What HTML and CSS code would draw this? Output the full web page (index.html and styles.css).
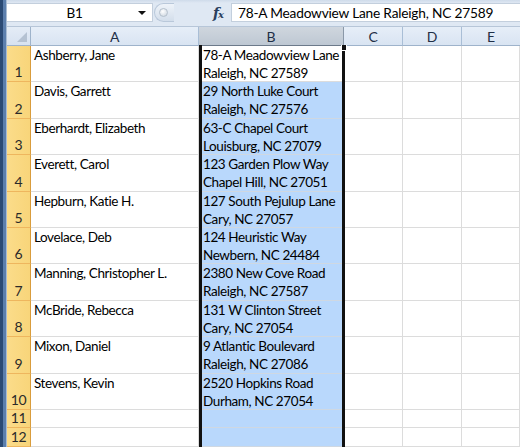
FILE: index.html
```html
<!DOCTYPE html>
<html>
<head>
<meta charset="utf-8">
<link rel="stylesheet" href="styles.css">
</head>
<body>
<div class="app">
  <div class="side"></div>
  <div class="main">
    <div class="fbar">
      <div class="namebox">
        <span class="name">B1</span>
        <span class="drop"></span>
      </div>
      <div class="grip"><span class="knob"></span></div>
      <div class="fx"><i>f</i><span class="x">x</span></div>
      <div class="formula">78-A Meadowview Lane Raleigh, NC 27589</div>
    </div>
    <div class="sheet">
      <div class="corner"><span class="tri"></span></div>
      <div class="ch">A</div>
      <div class="ch sel">B</div>
      <div class="ch">C</div>
      <div class="ch">D</div>
      <div class="ch last">E</div>

      <div class="rh">1</div><div class="c">Ashberry, Jane</div><div class="c b active">78-A Meadowview Lane<br>Raleigh, NC 27589</div><div class="c"></div><div class="c"></div><div class="c"></div>
      <div class="rh">2</div><div class="c">Davis, Garrett</div><div class="c b">29 North Luke Court<br>Raleigh, NC 27576</div><div class="c"></div><div class="c"></div><div class="c"></div>
      <div class="rh">3</div><div class="c">Eberhardt, Elizabeth</div><div class="c b">63-C Chapel Court<br>Louisburg, NC 27079</div><div class="c"></div><div class="c"></div><div class="c"></div>
      <div class="rh">4</div><div class="c">Everett, Carol</div><div class="c b">123 Garden Plow Way<br>Chapel Hill, NC 27051</div><div class="c"></div><div class="c"></div><div class="c"></div>
      <div class="rh">5</div><div class="c">Hepburn, Katie H.</div><div class="c b">127 South Pejulup Lane<br>Cary, NC 27057</div><div class="c"></div><div class="c"></div><div class="c"></div>
      <div class="rh">6</div><div class="c">Lovelace, Deb</div><div class="c b">124 Heuristic Way<br>Newbern, NC 24484</div><div class="c"></div><div class="c"></div><div class="c"></div>
      <div class="rh">7</div><div class="c">Manning, Christopher L.</div><div class="c b">2380 New Cove Road<br>Raleigh, NC 27587</div><div class="c"></div><div class="c"></div><div class="c"></div>
      <div class="rh">8</div><div class="c">McBride, Rebecca</div><div class="c b">131 W Clinton Street<br>Cary, NC 27054</div><div class="c"></div><div class="c"></div><div class="c"></div>
      <div class="rh">9</div><div class="c">Mixon, Daniel</div><div class="c b">9 Atlantic Boulevard<br>Raleigh, NC 27086</div><div class="c"></div><div class="c"></div><div class="c"></div>
      <div class="rh">10</div><div class="c">Stevens, Kevin</div><div class="c b">2520 Hopkins Road<br>Durham, NC 27054</div><div class="c"></div><div class="c"></div><div class="c"></div>
      <div class="rh">11</div><div class="c"></div><div class="c b"></div><div class="c"></div><div class="c"></div><div class="c"></div>
      <div class="rh">12</div><div class="c"></div><div class="c b"></div><div class="c"></div><div class="c"></div><div class="c"></div>

      <div class="selbox"><span class="handle"></span></div>
    </div>
  </div>
</div>
</body>
</html>
```
FILE: styles.css
```css
* { box-sizing: border-box; }
html, body { margin: 0; padding: 0; }
body {
  width: 520px;
  height: 447px;
  overflow: hidden;
  background: #fff;
  font-family: Lato, "Liberation Sans", sans-serif;
  font-size: 13.5px;
  letter-spacing: -0.25px;
  color: #000;
}
.app {
  display: flex;
  width: 520px;
  height: 447px;
}
.side {
  width: 7px;
  flex: none;
  background: linear-gradient(to right, #2b4a74 0, #2b4a74 3px, #5c7fad 3px, #5c7fad 6px, #a9bcd3 6px);
}
.main {
  flex: 1;
  display: flex;
  flex-direction: column;
  min-width: 0;
}
.fbar {
  height: 27px;
  flex: none;
  display: flex;
  align-items: stretch;
  padding: 3px 0 4px 0;
  background: linear-gradient(#cfdbea, #dfe8f3 3px, #dfe8f3);
  border-bottom: 1px solid #b7c6d8;
}
.namebox {
  width: 146px;
  background: #fff;
  border: 1px solid #c3cfdd;
  border-left: none;
  display: flex;
  align-items: center;
  position: relative;
}
.name {
  flex: 1;
  text-align: center;
  padding-left: 4px;
  color: #000;
}
.drop {
  width: 0; height: 0;
  border-left: 4px solid transparent;
  border-right: 4px solid transparent;
  border-top: 4px solid #111;
  margin-right: 6px;
  margin-top: 1px;
}
.grip {
  width: 20px;
  margin-left: 1px;
  border-radius: 10px 0 0 10px;
  background: linear-gradient(#eef3f9, #d3deeb);
  border: 1px solid #b9c8da;
  border-right: none;
  display: flex;
  align-items: center;
  padding-left: 4px;
}
.knob {
  width: 9px; height: 9px;
  border-radius: 50%;
  background: radial-gradient(circle at 40% 35%, #ffffff, #c7d1dc);
  border: 1px solid #b4c0cc;
}
.fx {
  width: 57px;
  display: flex;
  align-items: center;
  justify-content: flex-end;
  padding-right: 7px;
  color: #2a3f5e;
  font-family: "DejaVu Serif", "Liberation Serif", serif;
  font-weight: bold;
  letter-spacing: 0;
}
.fx i { font-size: 14px; }
.fx .x { font-size: 10px; font-style: italic; margin-top: 4px; margin-left: -1px; }
.formula {
  flex: 1;
  background: #fff;
  border: 1px solid #c3cfdd;
  border-right: none;
  display: flex;
  align-items: center;
  padding-left: 6px;
  white-space: nowrap;
  overflow: hidden;
  font-size: 13.7px;
  letter-spacing: -0.2px;
}
.sheet {
  flex: 1;
  position: relative;
  display: grid;
  grid-template-columns: 24px 168px 145px 59px 59px 1fr;
  grid-template-rows: 19px repeat(10, 36.4px) 18.5px 18.5px;
  overflow: hidden;
}
.corner {
  background: linear-gradient(#e4ecf6, #d7e2f0);
  border-right: 1px solid #9eb3cb;
  border-bottom: 1px solid #9eb3cb;
  position: relative;
}
.tri {
  position: absolute;
  right: 3px;
  bottom: 3px;
  width: 0; height: 0;
  border-left: 10px solid transparent;
  border-bottom: 10px solid #b5c2d2;
}
.ch {
  background: linear-gradient(#e6eef8, #d9e4f2);
  border-right: 1px solid #a9bed6;
  border-bottom: 1px solid #9eb3cb;
  display: flex;
  align-items: center;
  justify-content: center;
  color: #1f2f47;
  padding-top: 1px;
  font-size: 14px;
}
.ch.sel {
  background: linear-gradient(#cfd6de, #bec8d3);
  border-bottom: 1px solid #6c7a8a;
  border-right: 1px solid #8a98a8;
}
.ch.last { border-right: none; }
.rh {
  background: linear-gradient(to right, #fbdc8a, #f8d57a);
  border-right: 1px solid #d99c3c;
  border-bottom: 1px solid #eeb65e;
  display: flex;
  align-items: flex-end;
  justify-content: center;
  line-height: 18px;
  color: #2a2a2a;
  font-size: 14px;
}
.c {
  border-right: 1px solid #dcdcdc;
  border-bottom: 1px solid #dcdcdc;
  padding-left: 3px;
  line-height: 18px;
  white-space: nowrap;
  overflow: hidden;
  letter-spacing: -0.4px;
}
.c.b {
  background: #b9d8fc;
  padding-left: 4px;
  border-bottom-color: #cfd8e2;
}
.c.b.active { background: #fff; border-bottom-color: #dcdcdc; }
.selbox {
  position: absolute;
  left: 192px;
  top: 18px;
  width: 146px;
  bottom: -4px;
  border-left: 3px solid #111;
  border-right: 3px solid #111;
  pointer-events: none;
}
.handle {
  position: absolute;
  right: -5px;
  top: 0;
  width: 6px;
  height: 6px;
  background: #111;
  border: 1px solid #fff;
  border-top: none;
}
```
